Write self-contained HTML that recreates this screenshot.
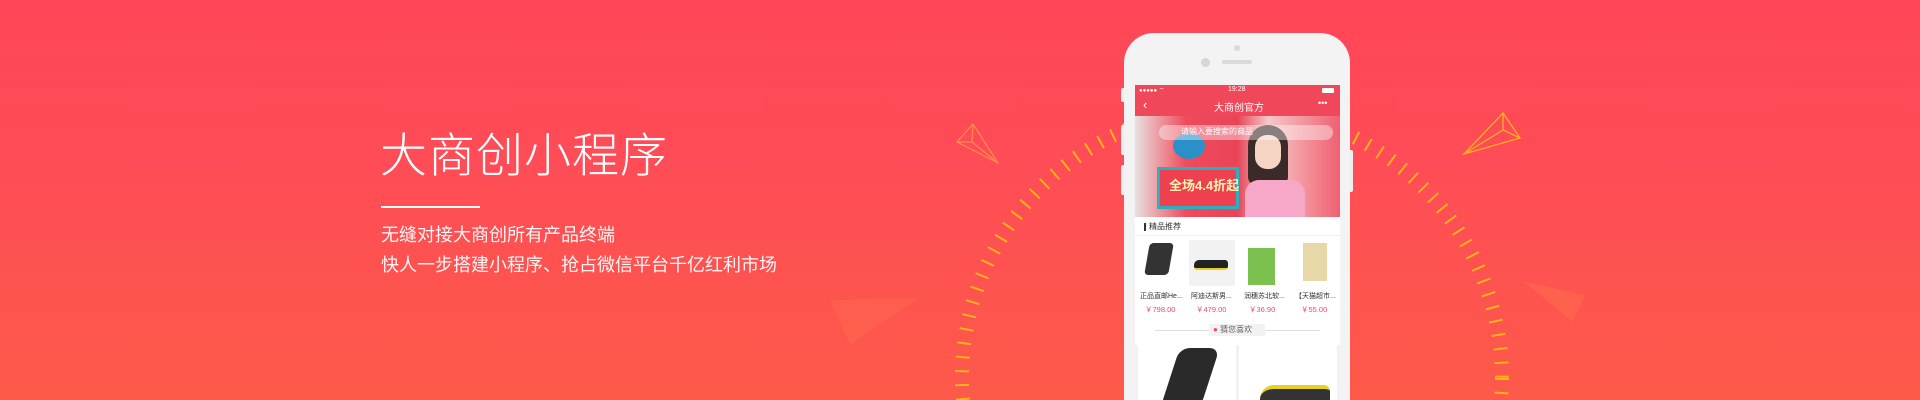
<!DOCTYPE html>
<html style="width:1920px;height:400px;overflow:hidden"><head><meta charset="utf-8"><style>
*{margin:0;padding:0;box-sizing:border-box}
body{width:1920px;height:400px;overflow:hidden;position:relative;font-family:"Liberation Sans","Noto Sans CJK SC",sans-serif;
background:linear-gradient(180deg,#ff4658 0%,#ff4c56 40%,#fd5a49 100%)}
.t{position:absolute;color:#fff;white-space:nowrap}
.ph{position:absolute;left:1124px;top:33px;width:226px;height:367px;background:#f3f3f3;border-radius:30px 30px 0 0}
.scr{position:absolute;left:1135px;top:85px;width:205px;height:315px;background:#f2f2f2;overflow:hidden}
.abs{position:absolute}
</style></head><body>
<svg class="abs" style="left:0;top:0" width="1920" height="400">
<circle cx="1232" cy="378" r="270" fill="none" stroke="#ffb21a" stroke-width="14" stroke-dasharray="2 12"/>
<g fill="none" stroke="#ffa64a" stroke-width="1.2" opacity=".7">
<path d="M973 124 L998 163 L957 142 Z M973 124 L972 142 L998 163 M972 142 L957 142"/>
</g>
<g fill="none" stroke="#ffb21a" stroke-width="1.3">
<path d="M1503 113 L1520 138 L1464 154 Z M1503 113 L1503 130 L1520 138 M1503 130 L1464 154"/>
</g>
<path d="M1523 281 L1585 295 L1573 322 Z" fill="#ff7a4a" opacity=".35"/>
<path d="M830 300 L920 298 L850 345 Z" fill="#ff7a50" opacity=".25"/>
</svg>
<div class="t" style="left:380px;top:117px;font-size:47px;font-weight:300;letter-spacing:1px">大商创小程序</div>
<div class="abs" style="left:381px;top:206px;width:99px;height:2px;background:#fff"></div>
<div class="t" style="left:381px;top:221px;font-size:18px;opacity:.95">无缝对接大商创所有产品终端</div>
<div class="t" style="left:381px;top:251px;font-size:18px;opacity:.95">快人一步搭建小程序、抢占微信平台千亿红利市场</div>

<div class="abs" style="left:1121px;top:88px;width:5px;height:14px;background:#eee;border-radius:2px"></div>
<div class="abs" style="left:1121px;top:125px;width:5px;height:30px;background:#eee;border-radius:2px"></div>
<div class="abs" style="left:1121px;top:165px;width:5px;height:30px;background:#eee;border-radius:2px"></div>
<div class="abs" style="left:1348px;top:150px;width:5px;height:42px;background:#eee;border-radius:2px"></div>
<div class="ph"></div>
<div class="abs" style="left:1234px;top:45px;width:6px;height:6px;border-radius:3px;background:#d9d9d9"></div>
<div class="abs" style="left:1201px;top:58px;width:9px;height:9px;border-radius:5px;background:#d6d6d6"></div>
<div class="abs" style="left:1222px;top:60px;width:30px;height:4px;border-radius:2px;background:#d9d9d9"></div>
<div class="scr">
 <div class="abs" style="left:0;top:0;width:205px;height:31px;background:#f0485a"></div>
 <div class="t" style="left:4px;top:1px;font-size:6px">●●●●● ⌔</div>
 <div class="t" style="left:93px;top:1px;font-size:7px">19:28</div>
 <div class="abs" style="left:187px;top:3px;width:12px;height:5px;background:#fff;border-radius:1px"></div>
 <div class="t" style="left:8px;top:12px;font-size:13px">‹</div>
 <div class="t" style="left:79px;top:14px;font-size:10px">大商创官方</div>
 <div class="t" style="left:183px;top:13px;font-size:9px">•••</div>
 <div class="abs" style="left:0;top:31px;width:205px;height:101px;background:linear-gradient(90deg,#e8e0e0 0%,#f04a5c 25%,#e84458 50%,#f5c8c8 65%,#f06070 100%)"></div>
 <div class="abs" style="left:22px;top:82px;width:82px;height:42px;background:#ef4050;border:3px solid #2ab0c0"></div>
 <div class="t" style="left:34px;top:90px;font-size:13px;color:#fff6b0;font-weight:bold">全场4.4折起</div>
 <div class="abs" style="left:38px;top:48px;width:32px;height:26px;background:#2a90c8;border-radius:50%"></div>
 <div class="abs" style="left:113px;top:40px;width:40px;height:60px;background:#3a2a28;border-radius:20px 20px 8px 8px"></div>
 <div class="abs" style="left:120px;top:50px;width:26px;height:34px;background:#f5d4c4;border-radius:12px"></div>
 <div class="abs" style="left:110px;top:95px;width:60px;height:37px;background:#f7a8c8;border-radius:14px 14px 0 0"></div>
 <div class="abs" style="left:24px;top:40px;width:174px;height:15px;background:rgba(255,255,255,.4);border-radius:8px"></div>
 <div class="t" style="left:46px;top:41px;font-size:8px;color:#fff">请输入要搜索的商品</div>
 <div class="abs" style="left:0;top:132px;width:205px;height:128px;background:#fff"></div>
 <div class="abs" style="left:9px;top:138px;width:2px;height:8px;background:#333"></div>
 <div class="t" style="left:14px;top:136px;font-size:8px;color:#333">精品推荐</div>
 <div class="abs" style="left:0;top:150px;width:205px;height:1px;background:#eee"></div>
 <div class="abs" style="left:12px;top:158px;width:24px;height:32px;background:#333;transform:skew(-10deg);border-radius:4px"></div>
 <div class="abs" style="left:54px;top:155px;width:46px;height:46px;background:#f2f2f2"></div>
 <div class="abs" style="left:59px;top:175px;width:34px;height:10px;background:#222;border-radius:5px 3px 3px 3px;border-bottom:2px solid #e8d020"></div>
 <div class="abs" style="left:113px;top:155px;width:27px;height:45px;background:#7cc050;border-top:8px solid #fff"></div>
 <div class="abs" style="left:168px;top:158px;width:24px;height:38px;background:#e8d8a8"></div>
 <div class="t" style="left:5px;top:206px;font-size:7px;color:#333">正品直邮He...</div>
 <div class="t" style="left:56px;top:206px;font-size:7px;color:#333">阿迪达斯男...</div>
 <div class="t" style="left:109px;top:206px;font-size:7px;color:#333">润穗苏北软...</div>
 <div class="t" style="left:160px;top:206px;font-size:7px;color:#333">【天猫超市...</div>
 <div class="t" style="left:10px;top:219px;font-size:7.5px;color:#f04a5c">￥798.00</div>
 <div class="t" style="left:61px;top:219px;font-size:7.5px;color:#f04a5c">￥479.00</div>
 <div class="t" style="left:114px;top:219px;font-size:7.5px;color:#f04a5c">￥36.90</div>
 <div class="t" style="left:166px;top:219px;font-size:7.5px;color:#f04a5c">￥55.00</div>
 <div class="abs" style="left:20px;top:245px;width:165px;height:1px;background:#ddd"></div>
 <div class="abs" style="left:74px;top:239px;width:56px;height:12px;background:#f2f2f2"></div>
 <div class="t" style="left:78px;top:239px;font-size:8px;color:#666"><span style="color:#f04a5c">●</span> 猜您喜欢</div>
 <div class="abs" style="left:3px;top:255px;width:98px;height:80px;background:#fff"></div>
 <div class="abs" style="left:104px;top:255px;width:98px;height:80px;background:#fff"></div>
 <div class="abs" style="left:35px;top:263px;width:40px;height:60px;background:#2a2a2a;transform:skew(-18deg);border-radius:10px"></div>
 <div class="abs" style="left:125px;top:300px;width:70px;height:30px;background:#333;border-radius:14px 6px 0 0;border-top:4px solid #e8d020"></div>
</div>
</body></html>
